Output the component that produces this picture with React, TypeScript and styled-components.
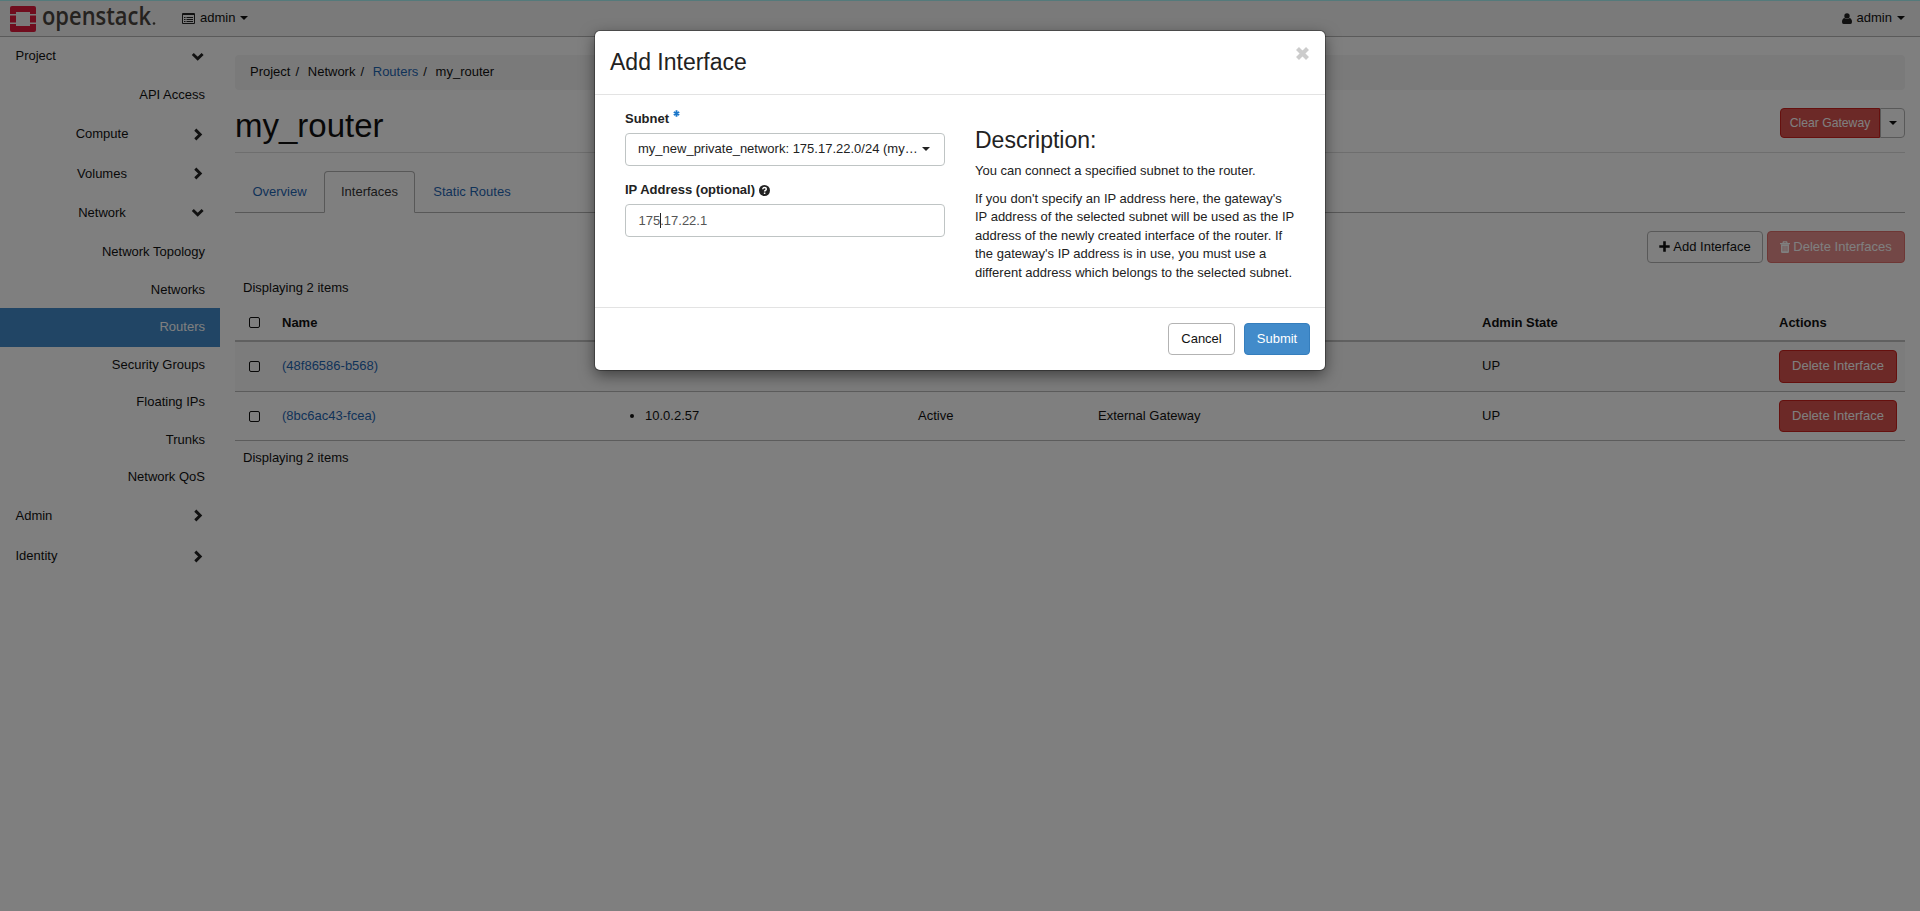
import React from 'react';
import styled, { createGlobalStyle } from 'styled-components';

const Global = createGlobalStyle`
  * { box-sizing: border-box; }
  body {
    margin: 0;
    overflow: hidden;
    background: #fff;
    color: #111;
    font-family: "Liberation Sans", Arial, sans-serif;
    font-size: 13px;
    line-height: 18px;
  }
`;

const Page = styled.div`
  height: 911px;
  position: relative;
  display: flex;
  flex-direction: column;
`;

const TopBar = styled.header`
  height: 37px;
  display: flex;
  align-items: center;
  padding: 0 15px 0 10px;
  background: #f4f4f4;
  border-top: 1px solid #a8f4f6;
  border-bottom: 1px solid #b4b4b4;
`;

const Brand = styled.div`
  width: 172px;
  display: flex;
  align-items: center;
  gap: 6px;
`;

const Wordmark = styled.svg`
  display: block;
  overflow: visible;
  margin-top: -3px;
`;

const TopMenu = styled.div<{ $push?: boolean }>`
  display: flex;
  align-items: center;
  gap: 5px;
  height: 18px;
  margin-left: ${(p) => (p.$push ? 'auto' : '0')};
  margin-bottom: 1px;
`;

const Caret = styled.span`
  border: 4px solid transparent;
  border-top-color: currentColor;
  border-bottom: 0;
  flex: none;
`;

const Columns = styled.div`
  flex: 1;
  display: flex;
`;

const Sidebar = styled.nav`
  width: 220px;
  flex: none;
`;

const NavRow = styled.div<{ $h: number; $active?: boolean; $leaf?: boolean }>`
  height: ${(p) => p.$h}px;
  display: flex;
  align-items: center;
  justify-content: ${(p) => (p.$leaf ? 'flex-end' : 'space-between')};
  padding: 0 15px ${(p) => (p.$active ? '2px' : '0')} 15.5px;
  color: ${(p) => (p.$active ? '#fff' : 'inherit')};
  background: ${(p) => (p.$active ? '#428bca' : 'transparent')};
`;

const Chevron = styled.svg`
  width: 13px;
  height: 13px;
  margin-right: 0.7px;
  fill: none;
  stroke: #222;
  stroke-width: 2.9;
`;

const SubLabel = styled.span`
  width: 173px;
  text-align: center;
`;

const Main = styled.main`
  flex: 1;
  padding: 18px 15px 0;
`;

const Crumbs = styled.div`
  height: 35px;
  border-radius: 4px;
  background: #f5f5f5;
  display: flex;
  align-items: center;
  padding: 0 15px 2px;
`;

const Slash = styled.span`
  width: 17.3px;
  padding-left: 5px;
`;

const Link = styled.a`
  color: #1f66b3;
`;

const TitleRow = styled.div`
  height: 63px;
  margin-bottom: 18px;
  border-bottom: 1px solid #ddd;
  display: flex;
  justify-content: space-between;
`;

const Title = styled.h1`
  margin: 18px 0 0;
  font-size: 33px;
  font-weight: 400;
  line-height: 36px;
`;

const ButtonGroup = styled.div`
  display: flex;
  margin-top: 18px;
`;

type Tone = 'plain' | 'danger' | 'primary';
const tones: Record<Tone, string> = {
  plain: 'background:#fff;border-color:#b3b3b3;color:#111;',
  danger: 'background:#d9534f;border-color:#ca211c;color:#fff;',
  primary: 'background:#428bca;border-color:#357ebd;color:#fff;',
};

const Button = styled.button<{ $tone: Tone; $w: number; $h?: number; $side?: 'left' | 'right'; $faded?: boolean }>`
  width: ${(p) => p.$w}px;
  height: ${(p) => p.$h ?? 32}px;
  padding: 0 0 1px;
  display: inline-flex;
  align-items: center;
  justify-content: center;
  gap: 3px;
  border: 1px solid;
  border-radius: ${(p) => (p.$side === 'left' ? '4px 0 0 4px' : p.$side === 'right' ? '0 4px 4px 0' : '4px')};
  font: inherit;
  font-size: ${(p) => (p.$side ? 12.2 : 13)}px;
  white-space: nowrap;
  ${(p) => tones[p.$tone]}
  opacity: ${(p) => (p.$faded ? 0.65 : 1)};
`;

const Tabs = styled.div`
  height: 42px;
  display: flex;
  border-bottom: 1px solid #b0b0b0;
`;

const Tab = styled.div<{ $w: number; $active?: boolean }>`
  width: ${(p) => p.$w}px;
  height: 42px;
  padding-top: 11px;
  text-align: center;
  color: ${(p) => (p.$active ? '#333' : '#1f66b3')};
  border: 1px solid ${(p) => (p.$active ? '#b0b0b0' : 'transparent')};
  border-bottom-color: ${(p) => (p.$active ? '#fff' : 'transparent')};
  border-radius: 4px 4px 0 0;
`;

const TableActions = styled.div`
  display: flex;
  justify-content: flex-end;
  gap: 4px;
  margin-top: 18px;
`;

const Count = styled.div<{ $top: number }>`
  margin-top: ${(p) => p.$top}px;
  padding-left: 8px;
`;

const Row = styled.div<{ $h: number; $head?: boolean; $striped?: boolean }>`
  height: ${(p) => p.$h}px;
  padding-top: ${(p) => (p.$head ? 8 : 0)}px;
  display: grid;
  grid-template-columns: 47px 332px 304px 180px 384px 297px 1fr;
  align-items: center;
  font-weight: ${(p) => (p.$head ? 700 : 400)};
  background: ${(p) => (p.$striped ? '#f9f9f9' : 'transparent')};
  border-bottom: ${(p) => (p.$head ? '2px solid #c0c0c0' : '1px solid #b8b8b8')};
`;

const Cell = styled.span`
  padding-bottom: 1px;
`;

const Check = styled.span`
  width: 11px;
  height: 11px;
  margin-left: 14px;
  border: 1px solid #111;
  border-radius: 2px;
`;

const IpList = styled.ul`
  margin: 0;
  padding: 0 0 1px 31px;
`;

const Shade = styled.div`
  position: absolute;
  inset: 0;
  background: rgba(0, 0, 0, 0.5);
  display: flex;
  justify-content: center;
  align-items: flex-start;
  padding-top: 31px;
`;

const Dialog = styled.section`
  width: 730px;
  height: 339px;
  background: #fff;
  border-radius: 5px;
  box-shadow: 0 0 0 1px rgba(0, 0, 0, 0.3), 0 5px 15px rgba(0, 0, 0, 0.5);
  display: flex;
  flex-direction: column;
  color: #222;
`;

const DialogHead = styled.div`
  height: 64px;
  border-bottom: 1px solid #e3e3e3;
  display: flex;
  justify-content: space-between;
  padding: 18px 16px 0 15px;
`;

const Heading = styled.h3<{ $top?: number }>`
  margin: ${(p) => p.$top ?? 0}px 0 0;
  font-size: 23px;
  font-weight: 400;
  line-height: 26px;
`;

const CloseIcon = styled.svg`
  margin-top: -2px;
`;

const DialogBody = styled.div`
  height: 213px;
  display: grid;
  grid-template-columns: 320px 1fr;
  column-gap: 30px;
  padding: 15px 15px 0 30px;
  border-bottom: 1px solid #e3e3e3;
`;

const Label = styled.div<{ $top?: number }>`
  display: flex;
  align-items: center;
  gap: 4px;
  height: 18px;
  margin: ${(p) => p.$top ?? 0}px 0 5px;
  font-weight: 700;
`;

const Star = styled.svg`
  margin-bottom: 12px;
`;

const Field = styled.div<{ $muted?: boolean }>`
  height: 33px;
  border: 1px solid #bfc4c4;
  border-radius: 4px;
  display: flex;
  align-items: center;
  padding: ${(p) => (p.$muted ? '0 14px 0 12.5px' : '0 14px 1px 12px')};
  color: ${(p) => (p.$muted ? '#555' : '#222')};
`;

const Chosen = styled.span`
  width: 279px;
  margin-right: 5px;
  white-space: nowrap;
`;

const TextCursor = styled.span`
  width: 1px;
  height: 15px;
  margin: 0 -1px 0 0;
  background: #222;
`;

const Para = styled.p<{ $top: number }>`
  margin: ${(p) => p.$top}px 0 0;
  line-height: 18.57px;
  white-space: nowrap;
`;

const DialogFoot = styled.div`
  display: flex;
  justify-content: flex-end;
  gap: 9px;
  padding: 15px 15px 0;
`;

const PlusIcon = () => (
  <svg width="11" height="11" viewBox="0 0 11 11" stroke="currentColor" strokeWidth="2.6">
    <path d="M5.5 .3V10.7M.3 5.5H10.7" />
  </svg>
);

const TrashIcon = () => (
  <svg width="10" height="12" viewBox="0 0 10 12">
    <path d="M3 2.2L3.4 .8H6.6L7 2.2M0 2.7H10" fill="none" stroke="currentColor" strokeWidth="1.3" />
    <path
      fill="currentColor"
      fillRule="evenodd"
      d="M1 3.2H9V10.8Q9 12 7.8 12H2.2Q1 12 1 10.8ZM2.7 5V10.2H3.4V5ZM4.65 5V10.2H5.35V5ZM6.6 5V10.2H7.3V5Z"
    />
  </svg>
);

const UserIcon = () => (
  <svg width="10" height="11" viewBox="0 0 10 11" fill="#222">
    <circle cx="5" cy="2.9" r="2.7" />
    <path d="M2.3 4.9Q5 7.2 7.7 4.9Q10 5.6 10 9Q10 11 8.4 11H1.6Q0 11 0 9Q0 5.6 2.3 4.9Z" />
  </svg>
);

const nav: { label: string; h: number; kind: 'top' | 'sub' | 'leaf'; open?: boolean; active?: boolean }[] = [
  { label: 'Project', h: 38, kind: 'top', open: true },
  { label: 'API Access', h: 39, kind: 'leaf' },
  { label: 'Compute', h: 40, kind: 'sub' },
  { label: 'Volumes', h: 39, kind: 'sub' },
  { label: 'Network', h: 39, kind: 'sub', open: true },
  { label: 'Network Topology', h: 39, kind: 'leaf' },
  { label: 'Networks', h: 37, kind: 'leaf' },
  { label: 'Routers', h: 39, kind: 'leaf', active: true },
  { label: 'Security Groups', h: 35, kind: 'leaf' },
  { label: 'Floating IPs', h: 39, kind: 'leaf' },
  { label: 'Trunks', h: 37, kind: 'leaf' },
  { label: 'Network QoS', h: 37, kind: 'leaf' },
  { label: 'Admin', h: 41, kind: 'top' },
  { label: 'Identity', h: 40, kind: 'top' },
];

export default function App() {
  return (
    <Page>
      <Global />
      <TopBar>
        <Brand>
          <svg width="26" height="26" viewBox="0 0 26 26" fill="#e01a3c">
            <path d="M2 0H24Q26 0 26 2V8H20V6H6V8H0V2Q0 0 2 0ZM0 9.5H6V16.5H0ZM20 9.5H26V16.5H20ZM0 18H6V20H20V18H26V24Q26 26 24 26H2Q0 26 0 24Z" />
          </svg>
          <Wordmark width="116" height="36" fill="#4a453f">
            <text x="0" y="26" fontFamily="Open Sans" fontWeight="600" fontSize="25" textLength="109" lengthAdjust="spacingAndGlyphs">openstack</text>
            <circle cx="112" cy="24.5" r="1.3" />
          </Wordmark>
        </Brand>
        <TopMenu>
          <svg width="13" height="11" viewBox="0 0 13 11" fill="none" stroke="#222">
            <path d="M.5 .5H12.5V10.5H.5ZM.5 1.5H12.5M2 4.5H3.5M4.5 4.5H11M2 6.5H3.5M4.5 6.5H11M2 8.5H3.5M4.5 8.5H11" />
          </svg>
          admin
          <Caret />
        </TopMenu>
        <TopMenu $push>
          <UserIcon />
          admin
          <Caret />
        </TopMenu>
      </TopBar>
      <Columns>
        <Sidebar>
          {nav.map((n) => (
            <NavRow key={n.label} $h={n.h} $active={n.active} $leaf={n.kind === 'leaf'}>
              {n.kind === 'sub' ? <SubLabel>{n.label}</SubLabel> : n.label}
              {n.kind !== 'leaf' && (
                <Chevron viewBox="0 0 13 13">
                  <path d={n.open ? 'M1.8 4L6.7 8.8L11.6 4' : 'M4.3 1.6L9.2 6.5L4.3 11.4'} />
                </Chevron>
              )}
            </NavRow>
          ))}
        </Sidebar>
        <Main>
          <Crumbs>
            Project<Slash>/</Slash>Network<Slash>/</Slash><Link>Routers</Link><Slash>/</Slash>my_router
          </Crumbs>
          <TitleRow>
            <Title>my_router</Title>
            <ButtonGroup>
              <Button $tone="danger" $w={100} $h={30} $side="left">Clear Gateway</Button>
              <Button $tone="plain" $w={25} $h={30} $side="right"><Caret /></Button>
            </ButtonGroup>
          </TitleRow>
          <Tabs>
            <Tab $w={89}>Overview</Tab>
            <Tab $w={91} $active>Interfaces</Tab>
            <Tab $w={114}>Static Routes</Tab>
          </Tabs>
          <TableActions>
            <Button $tone="plain" $w={116}><PlusIcon />Add Interface</Button>
            <Button $tone="danger" $w={138} $faded><TrashIcon />Delete Interfaces</Button>
          </TableActions>
          <Count $top={16}>Displaying 2 items</Count>
          <Row $h={45} $head>
            <Check /><span>Name</span><span /><span /><span /><span>Admin State</span><span>Actions</span>
          </Row>
          <Row $h={50} $striped>
            <Check /><Cell><Link>(48f86586-b568)</Link></Cell><Cell /><Cell /><Cell /><Cell>UP</Cell>
            <Button $tone="danger" $w={118} $h={33}>Delete Interface</Button>
          </Row>
          <Row $h={49}>
            <Check /><Cell><Link>(8bc6ac43-fcea)</Link></Cell><IpList><li>10.0.2.57</li></IpList><Cell>Active</Cell><Cell>External Gateway</Cell><Cell>UP</Cell>
            <Button $tone="danger" $w={118}>Delete Interface</Button>
          </Row>
          <Count $top={8}>Displaying 2 items</Count>
        </Main>
      </Columns>
      <Shade>
        <Dialog>
          <DialogHead>
            <Heading>Add Interface</Heading>
            <CloseIcon width="13" height="13" viewBox="0 0 13 13" stroke="#ccc" strokeWidth="4.2">
              <path d="M1.5 1.5L11.5 11.5M11.5 1.5L1.5 11.5" />
            </CloseIcon>
          </DialogHead>
          <DialogBody>
            <div>
              <Label>
                Subnet
                <Star width="7" height="7" viewBox="0 0 7 7" stroke="#1a76c9" strokeWidth="1.8">
                  <path d="M3.5 .3V6.7M.8 1.9L6.2 5.1M6.2 1.9L.8 5.1" />
                </Star>
              </Label>
              <Field>
                <Chosen>my_new_private_network: 175.17.22.0/24 (my…</Chosen>
                <Caret />
              </Field>
              <Label $top={15}>
                IP Address (optional)
                <svg width="11" height="11" viewBox="0 0 11 11">
                  <circle cx="5.5" cy="5.5" r="5.5" fill="#222" />
                  <path d="M3.7 4.3Q3.8 2.6 5.5 2.6Q7.3 2.6 7.3 4.1Q7.3 5 6.3 5.5Q5.6 5.8 5.6 6.6M5.6 7.4V9" fill="none" stroke="#fff" strokeWidth="1.5" />
                </svg>
              </Label>
              <Field $muted>175<TextCursor />.17.22.1</Field>
            </div>
            <div>
              <Heading $top={17}>Description:</Heading>
              <Para $top={9}>You can connect a specified subnet to the router.</Para>
              <Para $top={9}>
                If you don't specify an IP address here, the gateway's<br />
                IP address of the selected subnet will be used as the IP<br />
                address of the newly created interface of the router. If<br />
                the gateway's IP address is in use, you must use a<br />
                different address which belongs to the selected subnet.
              </Para>
            </div>
          </DialogBody>
          <DialogFoot>
            <Button $tone="plain" $w={67}>Cancel</Button>
            <Button $tone="primary" $w={66}>Submit</Button>
          </DialogFoot>
        </Dialog>
      </Shade>
    </Page>
  );
}
